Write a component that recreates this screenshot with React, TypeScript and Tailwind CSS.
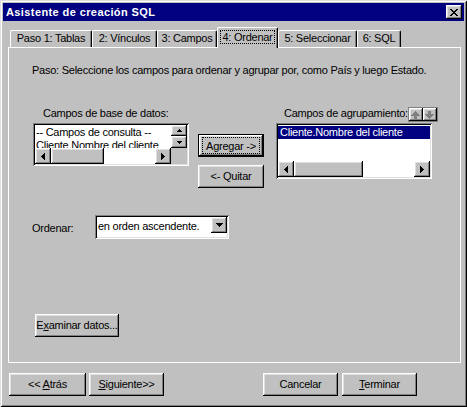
import React from "react";

const RAISED =
  "bg-[#c0c0c0] shadow-[inset_-1px_-1px_#000000,inset_1px_1px_#ffffff,inset_-2px_-2px_#808080,inset_2px_2px_#dfdfdf]";
const SUNKEN =
  "shadow-[inset_1px_1px_#808080,inset_-1px_-1px_#ffffff,inset_2px_2px_#000000,inset_-2px_-2px_#dfdfdf]";

type Dir = "up" | "down" | "left" | "right";

function Tri({ dir, color = "#000" }: { dir: Dir; color?: string }) {
  if (dir === "left")
    return (
      <svg width="4" height="7" viewBox="0 0 4 7" shapeRendering="crispEdges">
        <path d="M3 0h1v7h-1z M2 1h1v5h-1z M1 2h1v3h-1z M0 3h1v1h-1z" fill={color} />
      </svg>
    );
  if (dir === "right")
    return (
      <svg width="4" height="7" viewBox="0 0 4 7" shapeRendering="crispEdges">
        <path d="M0 0h1v7h-1z M1 1h1v5h-1z M2 2h1v3h-1z M3 3h1v1h-1z" fill={color} />
      </svg>
    );
  if (dir === "up")
    return (
      <svg width="7" height="4" viewBox="0 0 7 4" shapeRendering="crispEdges">
        <path d="M3 0h1v1h-1z M2 1h3v1h-3z M1 2h5v1h-5z M0 3h7v1h-7z" fill={color} />
      </svg>
    );
  return (
    <svg width="7" height="4" viewBox="0 0 7 4" shapeRendering="crispEdges">
      <path d="M0 0h7v1h-7z M1 1h5v1h-5z M2 2h3v1h-3z M3 3h1v1h-1z" fill={color} />
    </svg>
  );
}

function SmallTri({ dir }: { dir: "up" | "down" }) {
  return dir === "up" ? (
    <svg width="5" height="3" viewBox="0 0 5 3" shapeRendering="crispEdges">
      <path d="M2 0h1v1h-1z M1 1h3v1h-3z M0 2h5v1h-5z" fill="#000" />
    </svg>
  ) : (
    <svg width="5" height="3" viewBox="0 0 5 3" shapeRendering="crispEdges">
      <path d="M0 0h5v1h-5z M1 1h3v1h-3z M2 2h1v1h-1z" fill="#000" />
    </svg>
  );
}

function ScrollBtn({ dir }: { dir: Dir }) {
  return (
    <div className={`w-[16px] h-[16px] shrink-0 flex items-center justify-center ${RAISED}`}>
      <Tri dir={dir} />
    </div>
  );
}

function HScroll({ width, thumb }: { width: number; thumb: number }) {
  return (
    <div className="flex h-[16px] bg-white shrink-0" style={{ width }}>
      <ScrollBtn dir="left" />
      <div className={`h-[16px] shrink-0 ${RAISED}`} style={{ width: thumb }} />
      <div className="flex-1" />
      <ScrollBtn dir="right" />
    </div>
  );
}

function Button({
  children,
  className = "",
}: {
  children: React.ReactNode;
  className?: string;
}) {
  return (
    <div className={`h-[23px] flex items-center justify-center shrink-0 ${RAISED} ${className}`}>
      <span className="pb-[1px]">{children}</span>
    </div>
  );
}

function BlockArrow({ dir }: { dir: "up" | "down" }) {
  const d =
    dir === "up"
      ? "M4 0h1v1h-1z M3 1h3v1h-3z M2 2h5v1h-5z M1 3h7v1h-7z M0 4h9v1h-9z M3 5h3v3h-3z"
      : "M3 0h3v3h-3z M0 3h9v1h-9z M1 4h7v1h-7z M2 5h5v1h-5z M3 6h3v1h-3z M4 7h1v1h-1z";
  return (
    <svg width="9" height="8" viewBox="0 0 9 8" shapeRendering="crispEdges">
      <path d={d} fill="#808080" />
    </svg>
  );
}

function Tab({
  label,
  w,
  selected = false,
}: {
  label: string;
  w: number;
  selected?: boolean;
}) {
  if (selected)
    return (
      <div
        className="h-[21px] -mb-[1px] relative z-10 bg-[#c0c0c0] border-l border-t border-white border-r border-r-black rounded-tl-[2px] rounded-tr-[2px] shadow-[inset_-1px_0_#808080] flex justify-center pt-[2px] shrink-0"
        style={{ width: w }}
      >
        <span className="h-[14px] leading-[12px] px-[1px] border border-dotted border-black">
          {label}
        </span>
      </div>
    );
  return (
    <div
      className="h-[17px] border-l border-t border-white border-r border-r-black rounded-tl-[2px] rounded-tr-[2px] shadow-[inset_-1px_0_#808080] flex justify-center pt-[1px] shrink-0"
      style={{ width: w }}
    >
      {label}
    </div>
  );
}

export default function App() {
  return (
    <div
      className="w-[467px] h-[407px] bg-[#c0c0c0] p-[3px] flex flex-col text-[11px] leading-[13px] text-black tracking-[-0.25px] shadow-[inset_1px_1px_#dfdfdf,inset_-1px_-1px_#000000,inset_2px_2px_#ffffff,inset_-2px_-2px_#808080] overflow-hidden"
      style={{ fontFamily: '"Liberation Sans", Arial, sans-serif' }}
    >
      {/* Title bar */}
      <div className="h-[18px] bg-[#000080] flex items-center justify-between pl-[3px] pr-[2px] shrink-0">
        <span className="text-white font-bold tracking-[0.4px]">Asistente de creación SQL</span>
        <div className={`w-[16px] h-[14px] flex items-center justify-center ${RAISED}`}>
          <svg width="8" height="7" viewBox="0 0 8 7" shapeRendering="crispEdges">
            <path
              d="M0 0h2v1h-2z M6 0h2v1h-2z M1 1h2v1h-2z M5 1h2v1h-2z M2 2h4v1h-4z M3 3h2v1h-2z M2 4h4v1h-4z M1 5h2v1h-2z M5 5h2v1h-2z M0 6h2v1h-2z M6 6h2v1h-2z"
              fill="#000"
            />
          </svg>
        </div>
      </div>

      {/* Body */}
      <div className="px-[5px] flex flex-col">
        {/* Tabs */}
        <div className="mt-[6px] h-[20px] flex items-end pl-[2px]">
          <Tab label="Paso 1: Tablas" w={82} />
          <Tab label="2: Vínculos" w={65} />
          <Tab label="3: Campos" w={60} />
          <Tab label="4: Ordenar" w={61} selected />
          <Tab label="5: Seleccionar" w={79} />
          <Tab label="6: SQL" w={44} />
        </div>

        {/* Panel */}
        <div className="w-[453px] h-[316px] border border-white flex flex-col pt-[16px] pl-[23px]">
          <div className="whitespace-nowrap">
            Paso: Seleccione los campos para ordenar y agrupar por, como País y luego Estado.
          </div>

          {/* Lists row */}
          <div className="mt-[29px] flex items-start ml-[1px]">
            {/* Left list */}
            <div className="flex flex-col">
              <div className="h-[17px] pl-[10px] pt-[1px] whitespace-nowrap">Campos de base de datos:</div>
              <div className={`w-[156px] h-[43px] bg-white p-[2px] flex flex-col ${SUNKEN}`}>
                <div className="flex h-[23px]">
                  <div className="w-[136px] h-[23px] overflow-hidden whitespace-nowrap pl-[1px] pt-[1px]">
                    <div className="h-[13px]">-- Campos de consulta --</div>
                    <div className="h-[13px]">Cliente.Nombre del cliente</div>
                  </div>
                  <div className="w-[16px] flex flex-col">
                    <div className={`h-[11px] flex items-center justify-center ${RAISED}`}>
                      <SmallTri dir="up" />
                    </div>
                    <div className={`h-[12px] flex items-center justify-center ${RAISED}`}>
                      <SmallTri dir="down" />
                    </div>
                  </div>
                </div>
                <div className="flex h-[16px]">
                  <HScroll width={136} thumb={53} />
                  <div className="w-[16px] h-[16px] bg-[#c0c0c0]" />
                </div>
              </div>
            </div>

            {/* Middle buttons */}
            <div className="ml-[9px] mt-[28px] flex flex-col gap-[8px]">
              <div className={`w-[66px] h-[23px] border border-black flex ${RAISED}`}>
                <span className="flex-1 mt-[2px] mb-[2px] mx-[3px] border border-dotted border-black flex items-center justify-center leading-[12px]">
                  Agregar -&gt;
                </span>
              </div>
              <Button className="w-[66px]">&lt;- Quitar</Button>
            </div>

            {/* Right list */}
            <div className="ml-[12px] flex flex-col">
              <div className="h-[17px] w-[156px] flex items-start justify-between">
                <span className="pl-[8px] pt-[1px] whitespace-nowrap">Campos de agrupamiento:</span>
                <div className="flex mt-[1px] -mr-[3px] border border-[#808080]">
                  <div className={`w-[14px] h-[13px] flex items-center justify-center ${RAISED}`}>
                    <BlockArrow dir="up" />
                  </div>
                  <div className={`w-[14px] h-[13px] flex items-center justify-center ${RAISED}`}>
                    <BlockArrow dir="down" />
                  </div>
                </div>
              </div>
              <div className={`w-[156px] h-[56px] bg-white p-[2px] flex flex-col ${SUNKEN}`}>
                <div className="h-[36px] pt-[1px]">
                  <div className="h-[13px] bg-[#000080] text-white pl-[2px] whitespace-nowrap">
                    Cliente.Nombre del cliente
                  </div>
                </div>
                <HScroll width={152} thumb={69} />
              </div>
            </div>
          </div>

          {/* Ordenar row */}
          <div className="mt-[27px] flex items-start">
            <div className="w-[63px] mt-[7px]">Ordenar:</div>
            <div className={`w-[134px] h-[24px] bg-white p-[2px] flex ${SUNKEN}`}>
              <div className="flex-1 pl-[1px] pt-[3px] whitespace-nowrap">en orden ascendente.</div>
              <div className={`w-[16px] h-[16px] flex items-center justify-center ${RAISED}`}>
                <Tri dir="down" />
              </div>
            </div>
          </div>

          {/* Examinar */}
          <div className="mt-[75px] ml-[3px] flex">
            <Button className="w-[84px] h-[22px]">
              E<u>x</u>aminar datos...
            </Button>
          </div>
        </div>

        {/* Bottom buttons */}
        <div className="mt-[10px] flex pl-[1px]">
          <Button className="w-[77px]">
            &lt;&lt; <u>A</u>trás
          </Button>
          <Button className="w-[75px] ml-[3px]">
            <u>S</u>iguiente&gt;&gt;
          </Button>
          <Button className="w-[75px] ml-[99px]">Cancelar</Button>
          <Button className="w-[75px] ml-[4px]">
            <u>T</u>erminar
          </Button>
        </div>
      </div>
    </div>
  );
}
